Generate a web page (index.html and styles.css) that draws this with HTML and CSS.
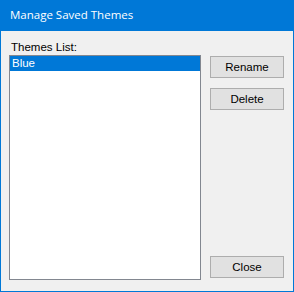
FILE: index.html
```html
<!DOCTYPE html>
<html>
  <head>
    <title>Manage Saved Themes</title>
    <meta charset="UTF-8" />
    <link rel="stylesheet" href="styles.css">
  </head>
  <body>
    <div class="window">
      <div class="titlebar">Manage Saved Themes</div>
      <div class="content">
        <div class="list-col">
          <label class="list-label" for="themes">Themes List:</label>
          <div class="listbox" id="themes">
            <div class="item selected">Blue</div>
          </div>
        </div>
        <div class="button-col">
          <button class="btn">Rename</button>
          <button class="btn">Delete</button>
          <div class="spacer"></div>
          <button class="btn">Close</button>
        </div>
      </div>
    </div>
  </body>
</html>
```

FILE: styles.css
```css
body {
  margin: 0;
  font-family: "Liberation Sans", Arial, sans-serif;
  font-size: 11.5px;
}

.window {
  width: 294px;
  height: 292px;
  box-sizing: border-box;
  border: 1px solid #0078d7;
  border-top: none;
  background-color: #f0f0f0;
  display: flex;
  flex-direction: column;
}

.titlebar {
  height: 31px;
  line-height: 30px;
  padding-left: 9px;
  background-color: #0078d7;
  color: #fff;
  font-family: "Open Sans", "Noto Sans", sans-serif;
  font-size: 11.5px;
}

.content {
  flex: 1;
  display: flex;
  padding: 8px 8px 11px 8px;
}

.list-col {
  display: flex;
  flex-direction: column;
  width: 192px;
}

.list-label {
  display: block;
  height: 16px;
  line-height: 16px;
  padding-left: 2px;
  color: #000;
}

.listbox {
  flex: 1;
  box-sizing: border-box;
  border: 1px solid #828790;
  background-color: #fff;
}

.item {
  height: 15px;
  line-height: 15px;
  padding-left: 2px;
}

.item.selected {
  background-color: #0078d7;
  color: #fff;
}

.button-col {
  display: flex;
  flex-direction: column;
  gap: 10px;
  margin-left: 9px;
  padding-top: 17px;
  padding-bottom: 2px;
}

.spacer {
  flex: 1;
}

.btn {
  width: 74px;
  height: 22px;
  box-sizing: border-box;
  border: 1px solid #adadad;
  background-color: #e1e1e1;
  font-family: "Liberation Sans", Arial, sans-serif;
  font-size: 11.5px;
  color: #000;
  padding: 0;
}
```
